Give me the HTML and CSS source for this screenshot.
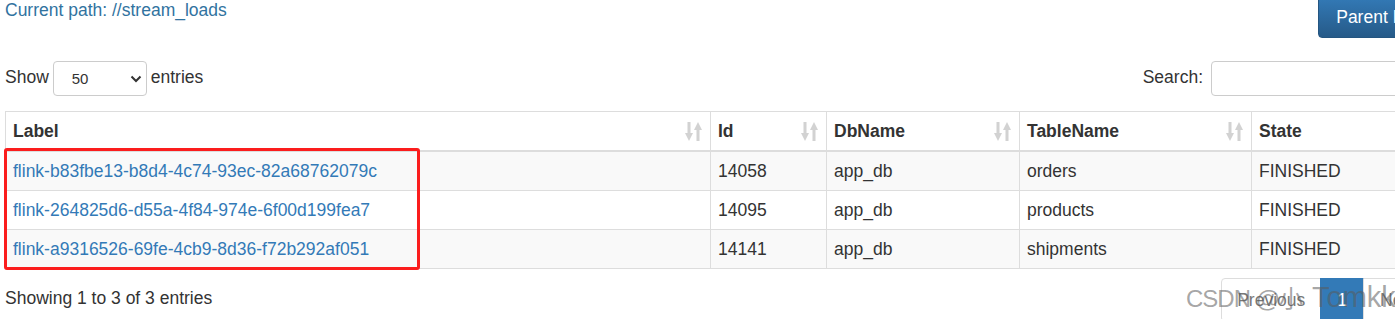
FILE: index.html
```html
<!DOCTYPE html>
<html lang="en">
<head>
  <meta charset="UTF-8" />
  <title>Stream Loads</title>
  <link rel="stylesheet" href="styles.css">
</head>
<body>
  <div class="page">
    <div class="top-bar">
      <span class="path">Current path: //stream_loads</span>
      <button class="btn-parent">Parent Dir</button>
    </div>

    <div class="controls">
      <label class="length">Show
        <span class="select-wrap">
          <select><option>50</option></select>
          <svg class="chevron" width="12" height="8" viewBox="0 0 12 8"><path d="M1.5 1.5 L6 6 L10.5 1.5" fill="none" stroke="#333" stroke-width="2"/></svg>
        </span>
        entries</label>
      <label class="search">Search: <input type="search"></label>
    </div>

    <table class="loads">
      <colgroup>
        <col style="width: 705px">
        <col style="width: 116px">
        <col style="width: 193px">
        <col style="width: 232px">
        <col>
      </colgroup>
      <thead>
        <tr>
          <th><div class="th-inner">Label<svg class="sort" width="17" height="19" viewBox="0 0 17 19"><path d="M2.5 0h3v11h2.5l-4 8l-4-8h2.5z M11.5 19h3v-11h2.5l-4-8l-4 8h2.5z"/></svg></div></th>
          <th><div class="th-inner">Id<svg class="sort" width="17" height="19" viewBox="0 0 17 19"><path d="M2.5 0h3v11h2.5l-4 8l-4-8h2.5z M11.5 19h3v-11h2.5l-4-8l-4 8h2.5z"/></svg></div></th>
          <th><div class="th-inner">DbName<svg class="sort" width="17" height="19" viewBox="0 0 17 19"><path d="M2.5 0h3v11h2.5l-4 8l-4-8h2.5z M11.5 19h3v-11h2.5l-4-8l-4 8h2.5z"/></svg></div></th>
          <th><div class="th-inner">TableName<svg class="sort" width="17" height="19" viewBox="0 0 17 19"><path d="M2.5 0h3v11h2.5l-4 8l-4-8h2.5z M11.5 19h3v-11h2.5l-4-8l-4 8h2.5z"/></svg></div></th>
          <th><div class="th-inner">State<svg class="sort" width="17" height="19" viewBox="0 0 17 19"><path d="M2.5 0h3v11h2.5l-4 8l-4-8h2.5z M11.5 19h3v-11h2.5l-4-8l-4 8h2.5z"/></svg></div></th>
        </tr>
      </thead>
      <tbody>
        <tr>
          <td><a href="#">flink-b83fbe13-b8d4-4c74-93ec-82a68762079c</a></td>
          <td>14058</td>
          <td>app_db</td>
          <td>orders</td>
          <td>FINISHED</td>
        </tr>
        <tr>
          <td><a href="#">flink-264825d6-d55a-4f84-974e-6f00d199fea7</a></td>
          <td>14095</td>
          <td>app_db</td>
          <td>products</td>
          <td>FINISHED</td>
        </tr>
        <tr>
          <td><a href="#">flink-a9316526-69fe-4cb9-8d36-f72b292af051</a></td>
          <td>14141</td>
          <td>app_db</td>
          <td>shipments</td>
          <td>FINISHED</td>
        </tr>
      </tbody>
    </table>

    <div class="footer">
      <div class="info">Showing 1 to 3 of 3 entries</div>
      <ul class="pagination">
        <li class="disabled">Previous</li>
        <li class="active">1</li>
        <li class="disabled">Next</li>
      </ul>
    </div>

    <div class="highlight"></div>
    <div class="watermark"><span class="wm-site">CSDN @小</span>Tomkk</div>
  </div>
</body>
</html>
```

FILE: styles.css
```css
html, body {
  margin: 0;
  padding: 0;
  background: #fff;
  overflow: hidden;
}

.page {
  position: relative;
  width: 1428px;
  padding: 0 5px;
  font-family: "Liberation Sans", Arial, sans-serif;
  font-size: 17.5px;
  line-height: 20px;
  color: #333;
}

.top-bar {
  display: flex;
  justify-content: space-between;
  align-items: flex-start;
}

.path {
  color: #31739f;
}

.btn-parent {
  margin-top: -4px;
  height: 42px;
  padding: 0 17px 0 17px;
  font-family: inherit;
  font-size: 17.5px;
  color: #fff;
  background: linear-gradient(to bottom, #337ab7 0%, #265a88 100%);
  border: 1px solid #245580;
  border-radius: 4px;
}

.controls {
  display: flex;
  justify-content: space-between;
  align-items: center;
  margin-top: 23px;
  height: 35px;
}

.length, .search {
  display: flex;
  align-items: center;
  padding-bottom: 3px;
}

.select-wrap {
  position: relative;
  margin: 3px 4px 0 4px;
}

.select-wrap select {
  appearance: none;
  -webkit-appearance: none;
  width: 94px;
  height: 35px;
  padding: 0 0 0 18px;
  font-family: inherit;
  font-size: 15px;
  color: #333;
  background: #fff;
  border: 1px solid #ccc;
  border-radius: 4px;
}

.chevron {
  position: absolute;
  right: 5px;
  top: 14px;
}

.search input {
  margin: 3px 0 0 8px;
  width: 222px;
  height: 35px;
  box-sizing: border-box;
  border: 1px solid #ccc;
  border-radius: 4px;
}

.loads {
  margin-top: 15px;
  width: 100%;
  table-layout: fixed;
  border-collapse: collapse;
}

.loads th, .loads td {
  padding: 9px 8px 9px 7px;
  text-align: left;
  border: 1px solid #ddd;
  white-space: nowrap;
  overflow: hidden;
}

.loads th {
  font-weight: bold;
  border-bottom: 2px solid #ddd;
}

.th-inner {
  display: flex;
  justify-content: space-between;
  align-items: center;
}

.sort {
  fill: #d2d2d2;
}

.loads tbody tr:nth-child(odd) td {
  background: #f9f9f9;
}

.loads a {
  color: #337ab7;
  text-decoration: none;
}

.footer {
  display: flex;
  justify-content: space-between;
  align-items: flex-start;
  margin-top: 9px;
}

.info {
  padding-top: 10px;
}

.pagination {
  display: flex;
  margin: 0;
  padding: 0;
  list-style: none;
}

.pagination li {
  padding: 11px 16px;
  border: 1px solid #ddd;
  margin-left: -1px;
  color: #777;
}

.pagination li:first-child {
  padding-left: 15px;
  padding-right: 15px;
  border-radius: 4px 0 0 4px;
}

.pagination li:last-child {
  border-radius: 0 4px 4px 0;
}

.pagination .active {
  background: #337ab7;
  border-color: #337ab7;
  color: #fff;
}

.highlight {
  position: absolute;
  left: 4px;
  top: 148px;
  width: 416px;
  height: 122px;
  box-sizing: border-box;
  border: 3px solid #fb1d1d;
  border-radius: 3px;
}

.watermark {
  position: absolute;
  left: 1186px;
  top: 280px;
  font-size: 29px;
  line-height: 34px;
  color: rgba(90, 90, 90, 0.55);
  white-space: nowrap;
  font-family: "Liberation Sans", "Noto Sans CJK SC", sans-serif;
}

.wm-site {
  font-size: 24px;
  letter-spacing: -1px;
  margin-right: 10px;
}
```
